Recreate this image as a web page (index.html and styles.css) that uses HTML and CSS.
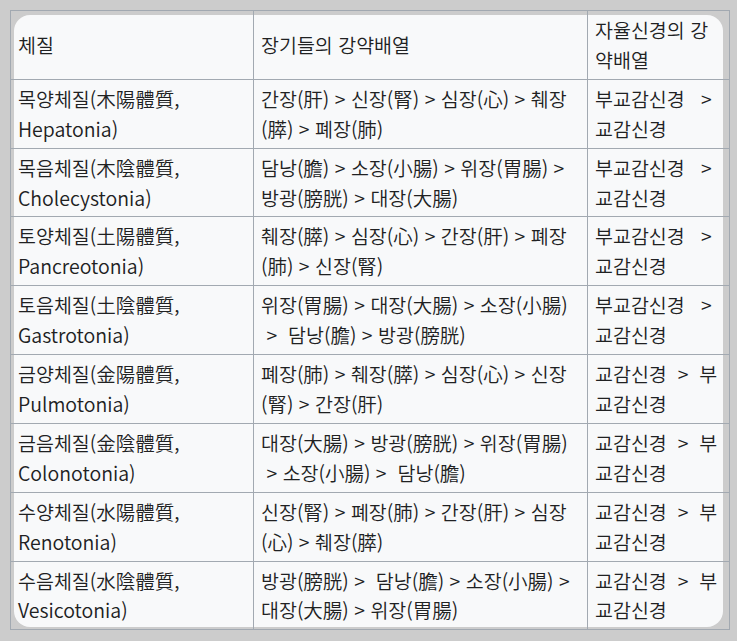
FILE: index.html
```html
<!DOCTYPE html>
<html lang="ko">
<head>
<meta charset="utf-8">
<title>체질</title>
<link rel="stylesheet" href="styles.css">
</head>
<body>
<div class="frame">
<table class="grid">
<colgroup><col class="c1"><col class="c2"><col class="c3"></colgroup>
<tr><th>체질</th><th>장기들의 강약배열</th><th>자율신경의 강약배열</th></tr>
<tr><td>목양체질(木陽體質, Hepatonia)</td><td>간장(肝) &gt; 신장(腎) &gt; 심장(心) &gt; 췌장(膵) &gt; 폐장(肺)</td><td>부교감신경 &nbsp;&nbsp;&gt; 교감신경</td></tr>
<tr><td>목음체질(木陰體質, Cholecystonia)</td><td>담낭(膽) &gt; 소장(小腸) &gt; 위장(胃腸) &gt; 방광(膀胱) &gt; 대장(大腸)</td><td>부교감신경 &nbsp;&nbsp;&gt; 교감신경</td></tr>
<tr><td>토양체질(土陽體質, Pancreotonia)</td><td>췌장(膵) &gt; 심장(心) &gt; 간장(肝) &gt; 폐장(肺) &gt; 신장(腎)</td><td>부교감신경 &nbsp;&nbsp;&gt; 교감신경</td></tr>
<tr><td>토음체질(土陰體質, Gastrotonia)</td><td>위장(胃腸) &gt; 대장(大腸) &gt; 소장(小腸) &nbsp;&gt; &nbsp;담낭(膽) &gt; 방광(膀胱)</td><td>부교감신경 &nbsp;&nbsp;&gt; 교감신경</td></tr>
<tr><td>금양체질(金陽體質, Pulmotonia)</td><td>폐장(肺) &gt; 췌장(膵) &gt; 심장(心) &gt; 신장(腎) &gt; 간장(肝)</td><td>교감신경 &nbsp;&gt;&nbsp; 부교감신경</td></tr>
<tr><td>금음체질(金陰體質, Colonotonia)</td><td>대장(大腸) &gt; 방광(膀胱) &gt; 위장(胃腸) &nbsp;&gt; 소장(小腸) &gt; &nbsp;담낭(膽)</td><td>교감신경 &nbsp;&gt;&nbsp; 부교감신경</td></tr>
<tr><td>수양체질(水陽體質, Renotonia)</td><td>신장(腎) &gt; 폐장(肺) &gt; 간장(肝) &gt; 심장(心) &gt; 췌장(膵)</td><td>교감신경 &nbsp;&gt;&nbsp; 부교감신경</td></tr>
<tr><td>수음체질(水陰體質, Vesicotonia)</td><td>방광(膀胱) &gt; &nbsp;담낭(膽) &gt; 소장(小腸) &gt; 대장(大腸) &gt; 위장(胃腸)</td><td>교감신경 &nbsp;&gt;&nbsp; 부교감신경</td></tr>
</table>
</div>
</body>
</html>
```
FILE: styles.css
```css
html, body {
  margin: 0;
  padding: 0;
  background: #cccccc;
}
body {
  padding: 10px;
  font-family: "Noto Sans CJK KR DemiLight", "Noto Sans CJK KR", "Noto Sans", sans-serif;
  font-size: 19.5px;
  color: #202122;
}
.frame {
  position: relative;
  width: 719px;
}
.frame::before {
  content: "";
  position: absolute;
  top: 5px;
  left: 4px;
  right: 6px;
  bottom: 3px;
  background: #f8f9fa;
  border-radius: 16px;
}
.grid {
  position: relative;
  width: 719px;
  table-layout: fixed;
  border-collapse: collapse;
  border: 1px solid #a2a9b1;
}
.c1 { width: 243px; }
.c2 { width: 334px; }
.c3 { width: 142px; }
.grid th, .grid td {
  border: 1px solid #a2a9b1;
  padding: 4px 8px 4px 7px;
  line-height: 29.9px;
  text-align: left;
  font-weight: normal;
  vertical-align: middle;
}
```
